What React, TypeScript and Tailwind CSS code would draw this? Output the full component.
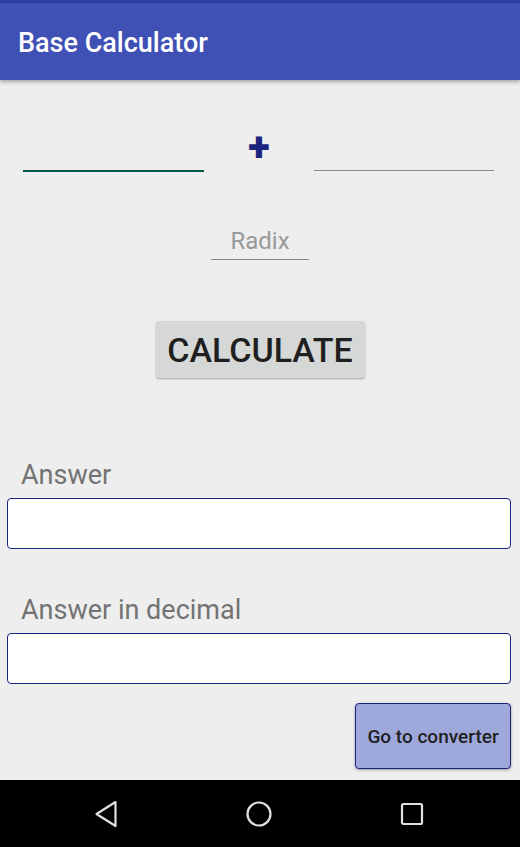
export default function App() {
  return (
    <div
      className="flex h-[847px] w-[520px] flex-col overflow-hidden bg-[#eeeeee]"
      style={{ fontFamily: 'Roboto, "Liberation Sans", sans-serif' }}
    >
      <div className="h-[3px] shrink-0 bg-[#303f9f]" />
      <header className="relative z-10 flex h-[77px] shrink-0 items-center bg-[#3f51b5] pl-[18px] pt-[3px] shadow-[0_2px_4px_rgba(0,0,0,0.3)]">
        <h1 className="text-[27px] font-medium leading-none text-white">Base Calculator</h1>
      </header>

      <main className="relative flex flex-1 flex-col">
        <div className="mt-[48px] flex items-end">
          <div className="ml-[23px] h-[2px] w-[181px] bg-[#00574b]" />
          <div className="flex w-[110px] justify-center">
            <span className="mb-[4px] text-[40px] font-black leading-none text-[#1a237e]">+</span>
          </div>
          <div className="mb-[1px] h-px w-[180px] bg-[#8a8a8a]" />
        </div>

        <div className="mt-[57px] flex justify-center">
          <div className="flex w-[98px] flex-col items-center">
            <span className="text-[24px] leading-none text-[#9a9a9a]">Radix</span>
            <div className="mt-[6px] h-px w-full bg-[#8a8a8a]" />
          </div>
        </div>

        <div className="mt-[61px] flex justify-center">
          <button className="flex h-[57px] w-[209px] items-center justify-center rounded-[3px] bg-[#d6d7d7] text-[34px] font-medium leading-none text-[#1f1f1f] shadow-[0_1px_2px_rgba(0,0,0,0.3)]">
            CALCULATE
          </button>
        </div>

        <p className="ml-[21px] mt-[84px] text-[27px] leading-none text-[#737373]">Answer</p>
        <div className="ml-[7px] mr-[9px] mt-[9px] h-[51px] rounded-[4px] border border-[#1a237e] bg-white" />

        <p className="ml-[21px] mt-[48px] text-[27px] leading-none text-[#737373]">Answer in decimal</p>
        <div className="ml-[7px] mr-[9px] mt-[9px] h-[51px] rounded-[4px] border border-[#1a237e] bg-white" />

        <div className="mr-[9px] mt-[19px] flex justify-end">
          <button className="flex h-[66px] w-[156px] items-center justify-center rounded-[4px] border border-[#1a237e] bg-[#9fa8da] text-[19px] font-medium leading-none text-[#1f1f1f] shadow-[0_1px_3px_rgba(0,0,0,0.35)]">
            Go to converter
          </button>
        </div>
      </main>

      <nav className="flex h-[67px] shrink-0 items-center bg-black pl-[76px]">
        <div className="flex items-center gap-[93px]">
          <div className="flex w-[60px] justify-center">
            <svg width="24" height="28" viewBox="0 0 24 28" fill="none" stroke="#e0e0e0" strokeWidth="2.2" strokeLinejoin="round">
              <path d="M21.5 2 L2.5 14 L21.5 26 Z" />
            </svg>
          </div>
          <div className="flex w-[60px] justify-center">
            <svg width="26" height="26" viewBox="0 0 26 26" fill="none" stroke="#e0e0e0" strokeWidth="2.2">
              <circle cx="13" cy="13" r="11.5" />
            </svg>
          </div>
          <div className="flex w-[60px] justify-center">
            <svg width="24" height="24" viewBox="0 0 24 24" fill="none" stroke="#e0e0e0" strokeWidth="2.2">
              <rect x="2" y="2" width="20" height="20" rx="1.5" />
            </svg>
          </div>
        </div>
      </nav>
    </div>
  )
}
